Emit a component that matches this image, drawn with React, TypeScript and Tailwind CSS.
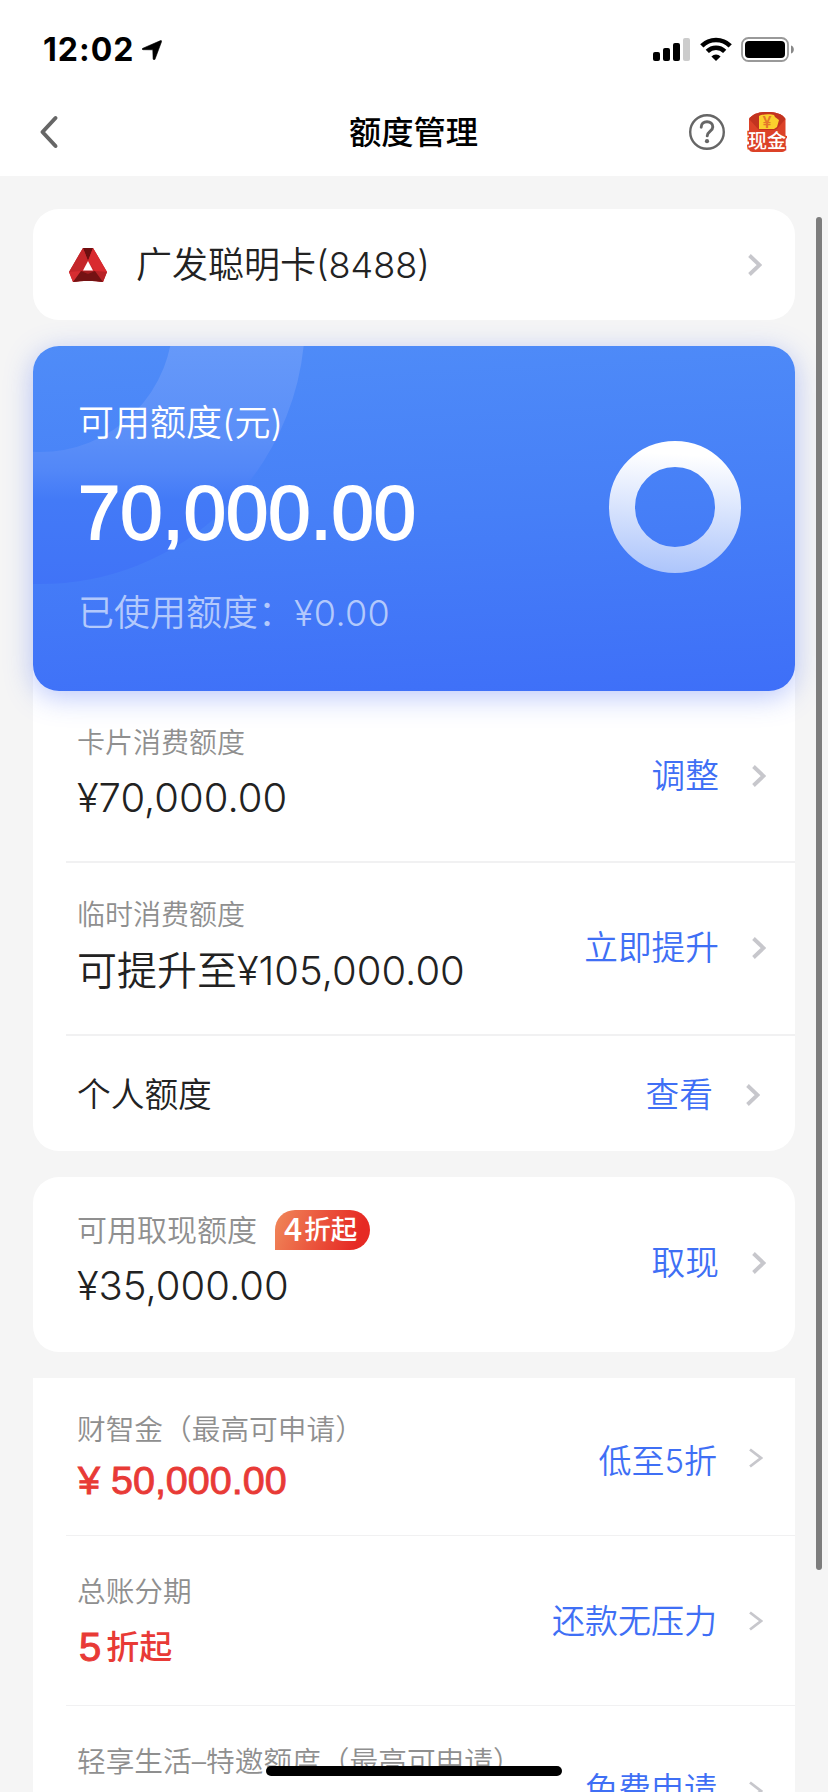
import type { ReactNode } from 'react'

function Chevron({ className = '', thin = false }: { className?: string; thin?: boolean }) {
  return (
    <svg width="14" height="22" viewBox="0 0 14 22" fill="none" className={`shrink-0 ${className}`}>
      <path
        d={thin ? 'M1 2.5l11 8.5-11 8.5' : 'M1.5 1.5L11.5 11 1.5 20.5'}
        stroke="#c7c7cc"
        strokeWidth={thin ? 2.8 : 3.8}
      />
    </svg>
  )
}

function StatusBar() {
  return (
    <div className="flex h-[88px] items-start justify-between pl-[43px] pr-[33px] pt-[37px]">
      <div className="flex items-center">
        <span className="text-[32px] font-bold leading-[25px] tracking-[1px] text-black">12:02</span>
        <svg width="20" height="20" viewBox="0 0 20 20" className="ml-[8px]">
          <path
            d="M1 8.2L18.6.6c.7-.3 1.2.2 1 .9L13 19.2c-.4.9-1.7.8-1.9-.2L10.8 9.8 1 9.7C-.1 9.5-.1 8.6 1 8.2z"
            fill="#000"
            stroke="#000"
            strokeWidth="0.6"
          />
        </svg>
      </div>
      <div className="flex items-start">
        <svg width="37" height="24" viewBox="0 0 37 24" className="mt-px">
          <rect x="0" y="14" width="7" height="9" rx="2" />
          <rect x="10" y="10" width="7" height="13" rx="2" />
          <rect x="20" y="5" width="7" height="18" rx="2" />
          <rect x="30" y="0" width="7" height="23" rx="2" fill="#cccccc" />
        </svg>
        <svg width="32" height="25" viewBox="0 0 32 25" fill="none" className="ml-[9.5px]">
          <path d="M1.8 8.8a20.2 20.2 0 0128.4 0" stroke="#000" strokeWidth="4.6" />
          <path d="M7.3 14.3a12.4 12.4 0 0117.4 0" stroke="#000" strokeWidth="4.6" />
          <path d="M16 24l-4.6-4.6a6.5 6.5 0 019.2 0z" fill="#000" />
        </svg>
        <svg width="54" height="25" viewBox="0 0 54 25" fill="none" className="ml-[9.5px]">
          <rect x="1" y="1" width="46" height="23" rx="6.5" stroke="#999" strokeWidth="1.8" />
          <rect x="4" y="4" width="40" height="17" rx="4" fill="#000" />
          <path d="M50 8.5c3.8 1 3.8 7 0 8z" fill="#888" />
        </svg>
      </div>
    </div>
  )
}

function CashIcon() {
  return (
    <svg width="40" height="42" viewBox="0 0 40 42">
      <path d="M2 8C6 2.5 13 1 20.500 1S35 2.500 38.500 8v30c0 2-1.500 3-3.500 3H6c-2 0-4-1-4-3z" fill="#dc4228" />
      <path d="M2 8C6 2.5 13 1 20.500 1S35 2.500 38.500 8L29 19H12z" fill="#c2331f" />
      <path d="M12 5c3-2 12-2 15-1l1 2 4 3-2 7-3 2H12z" fill="#fbd02d" />
      <text x="20" y="17" fontSize="16" textAnchor="middle" fill="#e5762b" fontWeight="600">¥</text>
      <text
        x="20"
        y="37"
        fontSize="19"
        fontWeight="500"
        textAnchor="middle"
        fill="#fff"
        stroke="#dc4228"
        strokeWidth="3"
        paintOrder="stroke"
      >
        现金
      </text>
    </svg>
  )
}

function NavBar() {
  return (
    <div className="flex h-[88px] items-center justify-between pl-[39px] pr-[41px]">
      <div className="w-[138px]">
        <svg width="20" height="34" viewBox="0 0 20 34" fill="none">
          <path d="M16.5 3L3.5 17l13 14" stroke="#666" strokeWidth="4" strokeLinecap="round" strokeLinejoin="round" />
        </svg>
      </div>
      <h1 className="pl-px pt-px text-[32.3px] font-medium leading-[44px] text-black">额度管理</h1>
      <div className="flex w-[138px] items-center justify-end">
        <svg width="38" height="38" viewBox="0 0 38 38" fill="none" className="mr-[21px]">
          <circle cx="19" cy="19" r="16.8" stroke="#666" strokeWidth="2.4" />
          <path
            d="M13.2 14.3c0-3.600 2.500-5.600 5.800-5.600s5.800 2 5.800 5.200c0 4.400-5.600 4.600-5.600 9"
            stroke="#666"
            strokeWidth="2.9"
            strokeLinecap="round"
          />
          <circle cx="19" cy="28.2" r="2.1" fill="#666" />
        </svg>
        <CashIcon />
      </div>
    </div>
  )
}

function BankLogo() {
  return (
    <svg width="38" height="34" viewBox="0 0 38 34" className="mt-px">
      <path d="M14 0h10l3 5 11 19-4 10c-8-1.5-22-1.5-30 0L0 24 11 5z" fill="#c9252b" />
      <path d="M14 0h10l-5 13z" fill="#6d0f10" />
      <path d="M14 0l5 13-7 10L0 24 11 5z" fill="#c4262a" />
      <path d="M24 0l-5 13 7 10 12 1L27 5z" fill="#d92a2f" />
      <path d="M0 24l12-1-8 11z" fill="#d62d31" />
      <path d="M38 24l-12-1 8 11z" fill="#b92327" />
      <path d="M12 23h14l8 11c-8-1.5-22-1.5-30 0z" fill="#741213" />
      <path d="M12 23l7 3 7-3z" fill="#a31d1f" />
      <path d="M19 13l5 9.500H14z" fill="#fff" />
    </svg>
  )
}

function SummaryCard() {
  return (
    <div className="relative flex h-[345px] justify-between overflow-hidden rounded-[26px] bg-[linear-gradient(177deg,#4f8cf8_0%,#467ff7_50%,#3e6ff8_100%)] pl-[45px] pr-[54px]">
      <svg width="280" height="240" viewBox="0 0 280 240" fill="none" className="absolute left-0 top-0">
        <defs>
          <linearGradient id="arc" x1="0" y1="0" x2="0" y2="240" gradientUnits="userSpaceOnUse">
            <stop offset="0" stopColor="#6699f9" />
            <stop offset="0.4" stopColor="#5a8ef8" />
            <stop offset="0.52" stopColor="#5287f8" />
            <stop offset="0.64" stopColor="#437af7" />
            <stop offset="1" stopColor="#4073f7" />
          </linearGradient>
        </defs>
        <circle cx="7" cy="-27" r="199" stroke="url(#arc)" strokeWidth="132" />
      </svg>
      <div className="relative pt-[54px] text-white">
        <div className="text-[36px] font-[350] leading-[46px]">可用额度(元)</div>
        <div className="mt-[22px] font-['Liberation_Sans',sans-serif] text-[76px] leading-[90px] [-webkit-text-stroke:1.8px_white]">
          70,000.00
        </div>
        <div className="mt-[32px] text-[36px] font-[350] leading-[46px] text-[#b3c9fc]">
          已使用额度：<span className="tracking-[0.3px]">¥0.00</span>
        </div>
      </div>
      <svg width="132" height="132" viewBox="0 0 132 132" fill="none" className="mt-[95px]">
        <defs>
          <linearGradient id="ring" x1="70" y1="0" x2="62" y2="132" gradientUnits="userSpaceOnUse">
            <stop offset="0.1" stopColor="#fff" />
            <stop offset="1" stopColor="#adc5fb" />
          </linearGradient>
        </defs>
        <circle cx="66" cy="66" r="53" stroke="url(#ring)" strokeWidth="26" />
      </svg>
    </div>
  )
}

function Action({ text, className, chevron = '', thin }: { text: string; className: string; chevron?: string; thin?: boolean }) {
  return (
    <div className={`flex items-center font-[350] text-[#3f6ff5] ${className}`}>
      <span className={thin ? 'mr-[32px] text-[33px] leading-[48px]' : 'mr-[33px] text-[33.7px] leading-[48px]'}>{text}</span>
      <Chevron thin={thin} className={chevron} />
    </div>
  )
}

function Row({ height, children }: { height: string; children: ReactNode }) {
  return <div className={`flex justify-between pl-[44px] ${height}`}>{children}</div>
}

function Divider({ className }: { className: string }) {
  return <div className={`ml-[33px] bg-[#f1f1f2] ${className}`} />
}

export default function App() {
  return (
    <div className="relative h-[1792px] w-[828px] overflow-hidden bg-[#f5f5f5] font-['Inter','Noto_Sans_CJK_SC',sans-serif] text-[#222]">
      <header className="bg-white">
        <StatusBar />
        <NavBar />
      </header>

      <main className="px-[33px] pt-[33px]">
        {/* Selected card */}
        <div className="flex h-[111px] items-center rounded-[26px] bg-white pl-[36px] pr-[33px]">
          <BankLogo />
          <span className="ml-[29px] grow text-[36px] font-[350] leading-[48px]">广发聪明卡(8488)</span>
          <Chevron />
        </div>

        {/* Limits */}
        <section className="mt-[26px] rounded-[26px] bg-white">
          <div className="rounded-[26px] shadow-[0_6px_28px_rgba(63,100,245,0.36)]">
            <SummaryCard />
          </div>
          <Row height="h-[170px]">
            <div className="pt-[32px] font-[350]">
              <div className="text-[28px] leading-[40px] text-[#8f8f8f]">卡片消费额度</div>
              <div className="mt-[7px] text-[40px] leading-[56px]">¥70,000.00</div>
            </div>
            <Action text="调整" className="pb-px pr-[29px]" />
          </Row>
          <Divider className="h-[2px]" />
          <Row height="h-[171px]">
            <div className="pt-[32px] font-[350]">
              <div className="text-[28px] leading-[40px] text-[#8f8f8f]">临时消费额度</div>
              <div className="mt-2 text-[40px] leading-[56px]">可提升至¥105,000.00</div>
            </div>
            <Action text="立即提升" className="pb-[2px] pr-[29px]" />
          </Row>
          <Divider className="h-[2px]" />
          <Row height="h-[115px]">
            <div className="self-center pt-[2px] text-[33.7px] font-[350] leading-[48px]">个人额度</div>
            <Action text="查看" className="pt-[2px] pr-[35px]" />
          </Row>
        </section>

        {/* Cash advance */}
        <section className="mt-[26px] rounded-[26px] bg-white">
          <Row height="h-[175px]">
            <div className="pt-[33px] font-[350]">
              <div className="flex items-center">
                <span className="text-[30px] leading-[38px] text-[#8f8f8f]">可用取现额度</span>
                <span className="ml-[18px] flex h-[40px] w-[95px] items-center rounded-[20px] rounded-bl-none bg-[linear-gradient(110deg,#f0885a_0%,#e62a24_85%)] pl-[9px] text-[26.5px] font-medium text-white">
                  <span className="mr-[2px] pb-[5px] font-['Noto_Sans_CJK_SC',sans-serif] text-[32px] leading-[35px]">4</span>
                  折起
                </span>
              </div>
              <div className="mt-[8px] text-[40px] leading-[56px]">¥35,000.00</div>
            </div>
            <Action text="取现" className="pb-[4px] pr-[29px]" />
          </Row>
        </section>

        {/* Offers */}
        <section className="mt-[26px] bg-white">
          <Row height="h-[157px]">
            <div className="pt-[32px]">
              <div className="text-[28.7px] font-[350] leading-[40px] text-[#8f8f8f]">财智金（最高可申请）</div>
              <div className="mt-[2px] pl-px font-['Liberation_Sans',sans-serif] text-[39.5px] leading-[56px] text-[#e83a36] [-webkit-text-stroke:0.9px_#e83a36]">
                ¥ 50,000.00
              </div>
            </div>
            <Action text="低至5折" className="pr-[32px] pt-[8px]" chevron="-mt-[6px]" thin />
          </Row>
          <Divider className="h-px" />
          <Row height="h-[169px]">
            <div className="pt-[36px]">
              <div className="text-[28.7px] font-[350] leading-[40px] text-[#8f8f8f]">总账分期</div>
              <div className="mt-[7px] flex items-center pl-[2px] text-[33px] font-medium leading-[56px] text-[#e83a36]">
                <span className="mr-[5px] font-['Liberation_Sans',sans-serif] text-[40px] [-webkit-text-stroke:1px_#e83a36]">5</span>
                折起
              </div>
            </div>
            <Action text="还款无压力" className="pr-[32px]" thin />
          </Row>
          <Divider className="h-px" />
          <Row height="h-[169px]">
            <div className="pt-[36px]">
              <div className="text-[28.7px] font-[350] leading-[40px] text-[#8f8f8f]">轻享生活–特邀额度（最高可申请）</div>
            </div>
            <Action text="免费申请" className="pb-[4px] pr-[32px]" chevron="mt-[4px]" thin />
          </Row>
        </section>
      </main>

      {/* Scrollbar and home indicator */}
      <div className="absolute left-[816px] top-[217px] h-[1353px] w-[6px] rounded-full bg-[#7d7d7d]" />
      <div className="absolute left-[266px] top-[1766px] h-[10px] w-[296px] rounded-full bg-black" />
    </div>
  )
}
